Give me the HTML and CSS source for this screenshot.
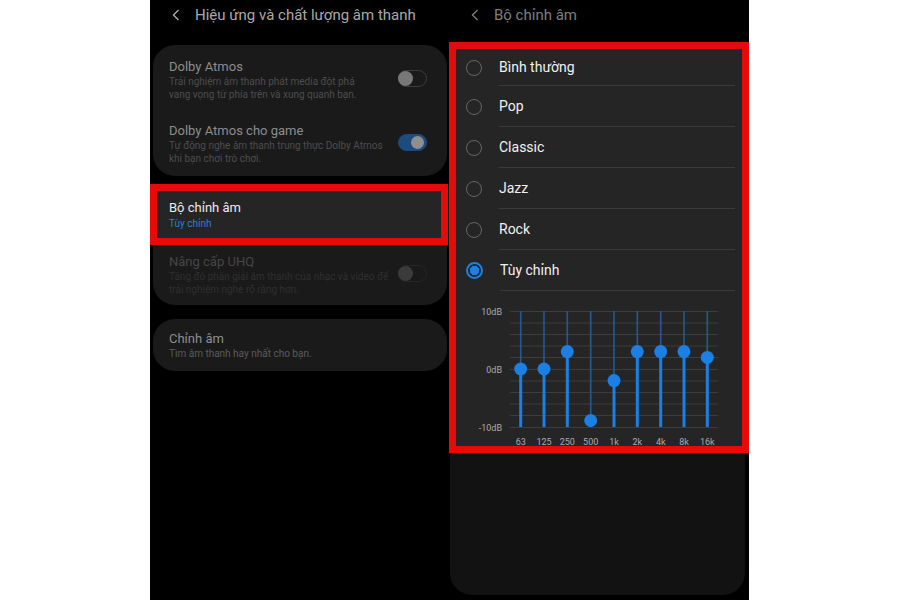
FILE: index.html
```html
<!DOCTYPE html>
<html lang="vi">
<head>
  <meta charset="UTF-8" />
  <meta name="viewport" content="width=device-width, initial-scale=1.0" />
  <title>Bộ chỉnh âm</title>
  <link rel="stylesheet" href="styles.css">
</head>
<body>
  <div class="frame">
    <section class="screen screen-left">
      <header class="topbar">
        <svg class="back" width="8" height="12" viewBox="0 0 8 12"><path d="M6.5 1 L1.5 6 L6.5 11" fill="none" stroke="currentColor" stroke-width="1.4"/></svg>
        <span>Hiệu ứng và chất lượng âm thanh</span>
      </header>

      <div class="card card-first">
        <div class="row">
          <div class="row-text">
            <div class="title">Dolby Atmos</div>
            <div class="sub">Trải nghiệm âm thanh phát media đột phá<br>vang vọng từ phía trên và xung quanh bạn.</div>
          </div>
          <span class="toggle"><span class="knob"></span></span>
        </div>
        <div class="row row-second">
          <div class="row-text">
            <div class="title">Dolby Atmos cho game</div>
            <div class="sub">Tự động nghe âm thanh trung thực Dolby Atmos<br>khi bạn chơi trò chơi.</div>
          </div>
          <span class="toggle on"><span class="knob"></span></span>
        </div>
      </div>

      <div class="card card-second">
        <div class="mark mark-left">
          <div class="title">Bộ chỉnh âm</div>
          <div class="sub accent">Tùy chỉnh</div>
        </div>
        <div class="row row-disabled">
          <div class="row-text">
            <div class="title">Nâng cấp UHQ</div>
            <div class="sub">Tăng độ phân giải âm thanh của nhạc và video để<br>trải nghiệm nghe rõ ràng hơn.</div>
          </div>
          <span class="toggle"><span class="knob"></span></span>
        </div>
      </div>

      <div class="card card-third">
        <div class="row">
          <div class="row-text">
            <div class="title">Chỉnh âm</div>
            <div class="sub">Tìm âm thanh hay nhất cho bạn.</div>
          </div>
        </div>
      </div>
    </section>

    <section class="screen screen-right">
      <header class="topbar topbar-dim">
        <svg class="back" width="8" height="12" viewBox="0 0 8 12"><path d="M6.5 1 L1.5 6 L6.5 11" fill="none" stroke="currentColor" stroke-width="1.4"/></svg>
        <span>Bộ chỉnh âm</span>
      </header>

      <div class="mark mark-right">
        <ul class="options">
          <li class="opt"><span class="radio"></span><span class="opt-label">Bình thường</span></li>
          <li class="opt"><span class="radio"></span><span class="opt-label">Pop</span></li>
          <li class="opt"><span class="radio"></span><span class="opt-label">Classic</span></li>
          <li class="opt"><span class="radio"></span><span class="opt-label">Jazz</span></li>
          <li class="opt"><span class="radio"></span><span class="opt-label">Rock</span></li>
          <li class="opt"><span class="radio checked"></span><span class="opt-label">Tùy chỉnh</span></li>
        </ul>

        <svg class="eq" width="286" height="155" viewBox="0 0 286 155">
          <g stroke="#3d3d3d" stroke-width="1">
            <line x1="54" y1="20.5" x2="262" y2="20.5"/>
            <line x1="54" y1="32" x2="262" y2="32"/>
            <line x1="54" y1="43.5" x2="262" y2="43.5"/>
            <line x1="54" y1="55" x2="262" y2="55"/>
            <line x1="54" y1="66.5" x2="262" y2="66.5"/>
            <line x1="54" y1="78.5" x2="262" y2="78.5"/>
            <line x1="54" y1="90" x2="262" y2="90"/>
            <line x1="54" y1="101.5" x2="262" y2="101.5"/>
            <line x1="54" y1="113" x2="262" y2="113"/>
            <line x1="54" y1="124.5" x2="262" y2="124.5"/>
            <line x1="54" y1="136.5" x2="262" y2="136.5"/>
          </g>
          <g class="eq-axis" text-anchor="end">
            <text x="46" y="23.5">10dB</text>
            <text x="46" y="81.5">0dB</text>
            <text x="46" y="139.5">-10dB</text>
          </g>
          <g stroke="#255a90" stroke-width="1.6">
            <line x1="64.7" y1="20" x2="64.7" y2="78"/>
            <line x1="88" y1="20" x2="88" y2="78"/>
            <line x1="111.3" y1="20" x2="111.3" y2="60.6"/>
            <line x1="134.7" y1="20" x2="134.7" y2="130"/>
            <line x1="158" y1="20" x2="158" y2="89.6"/>
            <line x1="181.3" y1="20" x2="181.3" y2="60.6"/>
            <line x1="204.7" y1="20" x2="204.7" y2="60.6"/>
            <line x1="228" y1="20" x2="228" y2="60.6"/>
            <line x1="251.3" y1="20" x2="251.3" y2="66.4"/>
          </g>
          <g stroke="#1b7fe3" stroke-width="3">
            <line x1="64.7" y1="78" x2="64.7" y2="136"/>
            <line x1="88" y1="78" x2="88" y2="136"/>
            <line x1="111.3" y1="60.6" x2="111.3" y2="136"/>
            <line x1="134.7" y1="130" x2="134.7" y2="136"/>
            <line x1="158" y1="89.6" x2="158" y2="136"/>
            <line x1="181.3" y1="60.6" x2="181.3" y2="136"/>
            <line x1="204.7" y1="60.6" x2="204.7" y2="136"/>
            <line x1="228" y1="60.6" x2="228" y2="136"/>
            <line x1="251.3" y1="66.4" x2="251.3" y2="136"/>
          </g>
          <g fill="#1b7fe3">
            <circle cx="64.7" cy="78" r="6.5"/>
            <circle cx="88" cy="78" r="6.5"/>
            <circle cx="111.3" cy="60.6" r="6.5"/>
            <circle cx="134.7" cy="129.5" r="6.5"/>
            <circle cx="158" cy="89.6" r="6.5"/>
            <circle cx="181.3" cy="60.6" r="6.5"/>
            <circle cx="204.7" cy="60.6" r="6.5"/>
            <circle cx="228" cy="60.6" r="6.5"/>
            <circle cx="251.3" cy="66.4" r="6.5"/>
          </g>
          <g class="eq-axis" text-anchor="middle">
            <text x="64.7" y="154">63</text>
            <text x="88" y="154">125</text>
            <text x="111.3" y="154">250</text>
            <text x="134.7" y="154">500</text>
            <text x="158" y="154">1k</text>
            <text x="181.3" y="154">2k</text>
            <text x="204.7" y="154">4k</text>
            <text x="228" y="154">8k</text>
            <text x="251.3" y="154">16k</text>
          </g>
        </svg>
      </div>

      <div class="panel-foot"></div>
    </section>
  </div>
</body>
</html>
```

FILE: styles.css
```css
body {
  margin: 0;
  background: #fff;
  font-family: Roboto, 'Noto Sans', Arial, sans-serif;
}
.frame {
  display: flex;
  margin-left: 150px;
  height: 600px;
}
.screen {
  background: #000;
  height: 600px;
  box-sizing: border-box;
}
.screen-left {
  width: 299px;
}
.screen-right {
  width: 300px;
}
.topbar {
  height: 30px;
  display: flex;
  align-items: center;
  padding-left: 22px;
  color: #a9a9a9;
  font-size: 15px;
}
.topbar .back {
  margin-right: 15px;
  flex: none;
}
.topbar-dim {
  color: #7e7e7e;
}
.card {
  background: #1a1a1a;
  border-radius: 22px;
  margin: 0 2px 0 3px;
}
.card-first {
  margin-top: 15px;
}
.card-second {
  margin-top: 8px;
}
.card-third {
  margin-top: 14px;
}
.row {
  display: flex;
  align-items: center;
  padding: 14px 20px 10px 16px;
}
.row-second {
  padding: 12px 20px 11px 16px;
}
.row-disabled {
  padding: 9px 20px 9px 16px;
}
.card-third .row {
  padding: 12px 20px 11px 16px;
}
.row-text {
  flex: 1;
}
.title {
  font-size: 13px;
  line-height: 16px;
  color: #8d8d8d;
}
.sub {
  font-size: 10px;
  line-height: 13px;
  color: #4d4d4d;
}
.card-third .sub {
  color: #5a5a5a;
}
.row-disabled .title {
  color: #464646;
}
.row-disabled .sub {
  color: #2f2f2f;
}
.toggle {
  flex: none;
  width: 27px;
  height: 15px;
  border: 1px solid #3c3c3c;
  border-radius: 9px;
  display: flex;
  align-items: center;
  margin-top: -3px;
}
.toggle .knob {
  width: 15px;
  height: 15px;
  border-radius: 50%;
  background: #787878;
  margin-left: -1px;
}
.toggle.on {
  background: #1c4c7d;
  border-color: #1c4c7d;
  justify-content: flex-end;
}
.toggle.on .knob {
  width: 13px;
  height: 13px;
  background: #8f8f8f;
  margin: 0 2px 0 0;
}
.row-disabled .toggle {
  border-color: #262626;
}
.row-disabled .toggle .knob {
  background: #3b3b3b;
}
.mark {
  border: 7px solid #e50b0d;
  background: #252525;
}
.mark-left {
  margin: 0 -1px 0 -3px;
  padding: 9px 12px 6px 12px;
  height: 47px;
  box-sizing: content-box;
  height: 32px;
}
.mark-left .title {
  color: #ebebeb;
}
.accent {
  color: #2c7fd4;
  margin-top: 1px;
}
.mark-right {
  margin-top: 12px;
  height: 397px;
  overflow: hidden;
}
.options {
  list-style: none;
  margin: 0;
  padding: 0;
}
.opt {
  height: 41px;
  display: flex;
  align-items: center;
  padding-left: 10px;
  box-sizing: border-box;
}
.opt:first-child {
  height: 37px;
}
.opt-label {
  flex: 1;
  align-self: stretch;
  display: flex;
  align-items: center;
  margin-right: 7px;
  border-bottom: 1px solid #3a3a3a;
  font-size: 14px;
  color: #f1f1f1;
}
.radio {
  flex: none;
  width: 14px;
  height: 14px;
  border: 1.5px solid #676767;
  border-radius: 50%;
  margin-right: 17px;
}
.radio.checked {
  border: 2px solid #1b7fe3;
  width: 13px;
  height: 13px;
  background: radial-gradient(circle, #1b7fe3 0 4.5px, transparent 5px);
}
.eq {
  display: block;
}
.eq-axis {
  font-family: Roboto, Arial, sans-serif;
  font-size: 9px;
  fill: #ababab;
}
.panel-foot {
  height: 142px;
  margin: 0 4px 0 1px;
  background: #121212;
  border-radius: 0 0 22px 22px;
}
```
